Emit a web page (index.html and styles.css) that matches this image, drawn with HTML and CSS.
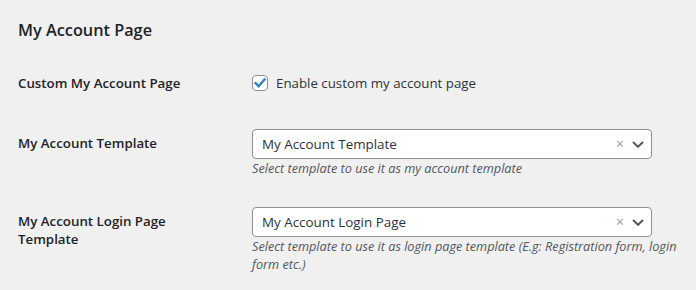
FILE: index.html
```html
<!DOCTYPE html>
<html>
<head>
<meta charset="utf-8">
<link rel="stylesheet" href="styles.css">
</head>
<body>
<div class="wrap">
  <h2 class="title">My Account Page</h2>
  <div class="form">
    <div class="row row-check">
      <div class="label">Custom My Account Page</div>
      <div class="field">
        <label class="check">
          <span class="box"><svg viewBox="0 0 16 16" width="16" height="16"><path d="M3.6 8.2 L6.6 11.2 L12.6 4.4" fill="none" stroke="#3582c4" stroke-width="2.4" stroke-linecap="square"/></svg></span>
          <span>Enable custom my account page</span>
        </label>
      </div>
    </div>
    <div class="row row-select">
      <div class="label">My Account Template</div>
      <div class="field">
        <div class="select">
          <span class="value">My Account Template</span>
          <span class="clear">&times;</span>
          <svg class="chev" viewBox="0 0 12 7" width="12" height="7"><path d="M1 1 L6 5.8 L11 1" fill="none" stroke="#50575e" stroke-width="2"/></svg>
        </div>
        <p class="desc">Select template to use it as my account template</p>
      </div>
    </div>
    <div class="row row-select row-last">
      <div class="label">My Account Login Page<br>Template</div>
      <div class="field">
        <div class="select">
          <span class="value">My Account Login Page</span>
          <span class="clear">&times;</span>
          <svg class="chev" viewBox="0 0 12 7" width="12" height="7"><path d="M1 1 L6 5.8 L11 1" fill="none" stroke="#50575e" stroke-width="2"/></svg>
        </div>
        <p class="desc">Select template to use it as login page template (E.g: Registration form, login form etc.)</p>
      </div>
    </div>
  </div>
</div>
</body>
</html>
```
FILE: styles.css
```css
html, body {
  margin: 0;
  padding: 0;
  background: #f0f0f1;
}
body {
  font-family: "Open Sans", "Noto Sans", sans-serif;
  font-size: 13.3px;
  color: #1d2327;
}
.wrap {
  padding: 0 10px 0 18px;
}
.title {
  margin: 0;
  padding-top: 18px;
  font-size: 16.3px;
  line-height: 24px;
  font-weight: 600;
  color: #1d2327;
}
.form {
  display: flex;
  flex-direction: column;
}
.row {
  display: grid;
  grid-template-columns: 234px 1fr;
}
.row-check {
  padding-top: 31px;
}
.row-select {
  padding-top: 36px;
}
.row-last {
  padding-top: 30px;
}
.label {
  font-size: 13.3px;
  font-weight: 600;
  line-height: 18px;
}
.row-check .label {
  padding-top: 1px;
}
.row-select .label {
  padding-top: 5px;
}
.check {
  display: flex;
  align-items: center;
  gap: 8px;
  height: 20px;
  font-size: 13.3px;
  color: #2c3338;
}
.box {
  width: 14px;
  height: 14px;
  border: 1px solid #8c8f94;
  border-radius: 4px;
  background: #fff;
  display: flex;
  align-items: center;
  justify-content: center;
  overflow: hidden;
}
.box svg {
  flex: none;
}
.select {
  width: 400px;
  height: 30px;
  box-sizing: border-box;
  border: 1px solid #8c8f94;
  border-radius: 4px;
  background: #fff;
  display: flex;
  align-items: center;
  padding: 0 7px 0 9px;
}
.value {
  flex: 1;
  font-size: 13.4px;
  color: #2c3338;
}
.clear {
  color: #999;
  font-size: 14px;
  margin-right: 8px;
  line-height: 1;
}
.chev {
  display: block;
}
.desc {
  margin: 0;
  font-style: italic;
  font-size: 12.7px;
  line-height: 18px;
  color: #50575e;
}
```
